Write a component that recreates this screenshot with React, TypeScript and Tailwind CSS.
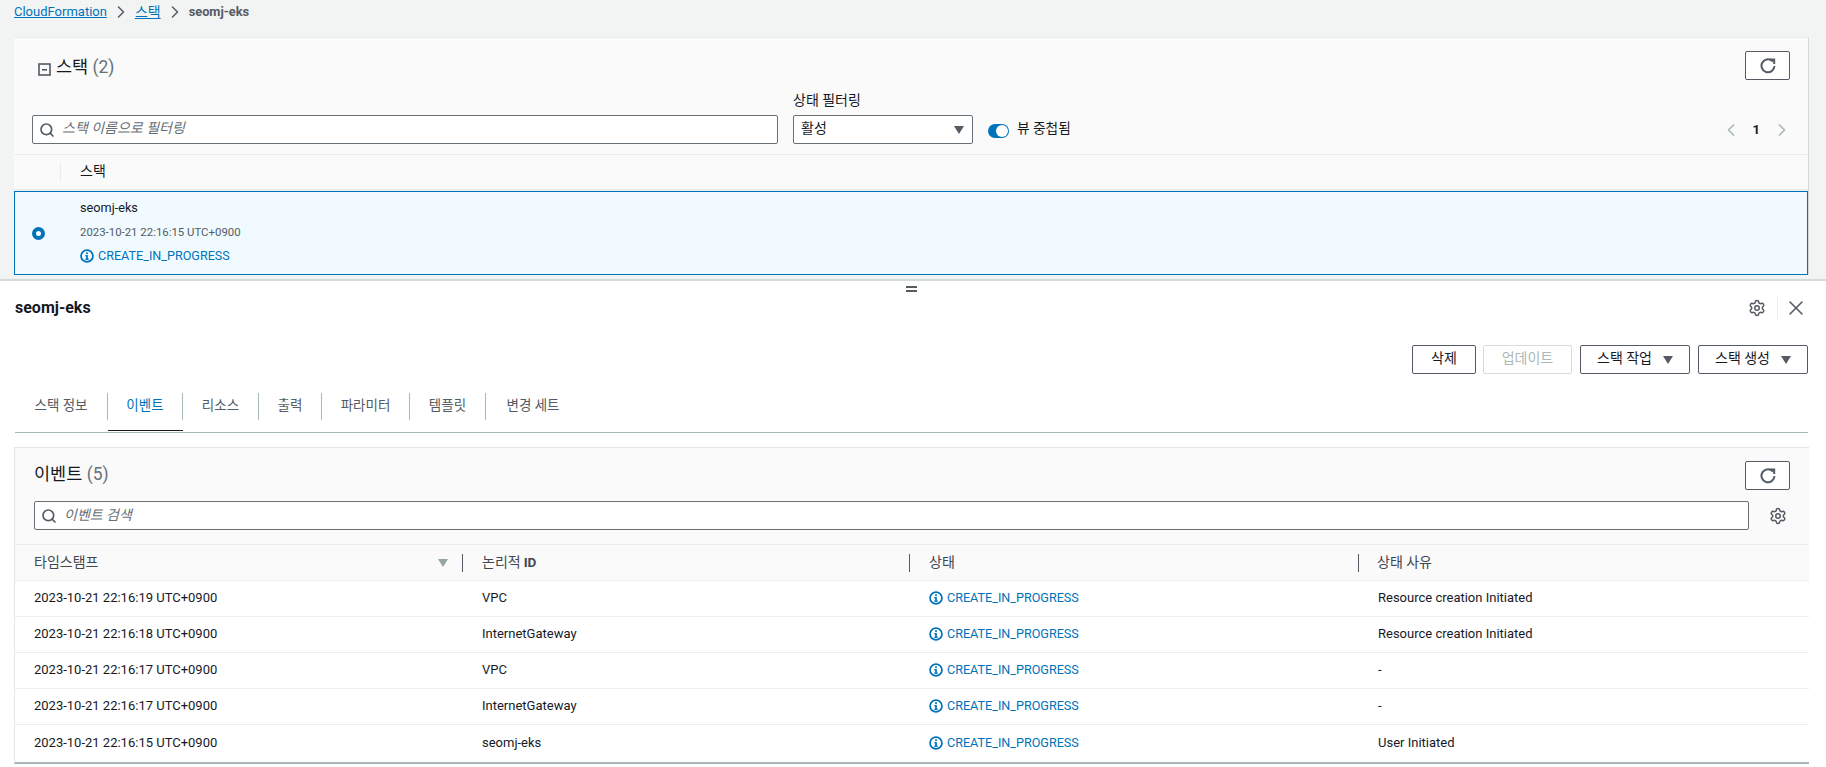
import React from "react";
import { ChevronLeft, ChevronRight, Settings, X, Search } from "lucide-react";

const F = "font-['Roboto','Noto_Sans_CJK_KR',sans-serif]";

function Info() {
  return (
    <svg width="14" height="14" viewBox="0 0 16 16" className="shrink-0">
      <circle cx="8" cy="8" r="6.8" fill="none" stroke="#0073bb" strokeWidth="2" />
      <rect x="7" y="7" width="2" height="5" fill="#0073bb" />
      <rect x="6" y="11" width="4" height="1.4" fill="#0073bb" />
      <rect x="6" y="7" width="2" height="1.3" fill="#0073bb" />
      <rect x="7" y="3.8" width="2" height="2" fill="#0073bb" />
    </svg>
  );
}

function Refresh() {
  return (
    <svg width="16" height="16" viewBox="0 0 16 16" fill="none" stroke="#545b64" strokeWidth="2">
      <path d="M13 3.6A6.5 6.5 0 1 0 14.5 8" />
      <path d="M9.5 1.5 H14.2 V6" strokeWidth="2" />
    </svg>
  );
}

function Caret({ color = "#545b64" }: { color?: string }) {
  return (
    <svg width="10" height="8" viewBox="0 0 10 8" className="shrink-0">
      <path d="M0 0H10L5 8Z" fill={color} />
    </svg>
  );
}

function SearchBox({ text, grow }: { text: string; grow?: boolean }) {
  return (
    <div className={`h-[29px] flex items-center bg-white border border-[#687078] rounded-[2px] pl-[6px] ${grow ? "flex-1" : "w-[746px]"}`}>
      <Search size={16} strokeWidth={2.5} color="#545b64" />
      <span className={`ml-[7px] text-[14px] italic text-[#687078] ${grow ? "" : "pb-[2px]"}`}>{text}</span>
    </div>
  );
}

function Btn({ label, w, caret, disabled }: { label: string; w: string; caret?: boolean; disabled?: boolean }) {
  return (
    <div className={`h-[29px] ${w} flex items-center justify-center gap-[11px] rounded-[2px] border text-[14px] ${disabled ? "border-[#d5dbdb] text-[#aab7b8]" : "border-[#545b64] text-[#16191f] bg-white"}`}>
      <span className="pb-[2px]">{label}</span>
      {caret && <Caret />}
    </div>
  );
}

const rows = [
  ["2023-10-21 22:16:19 UTC+0900", "VPC", "Resource creation Initiated", "h-[36px]"],
  ["2023-10-21 22:16:18 UTC+0900", "InternetGateway", "Resource creation Initiated", "h-[36px]"],
  ["2023-10-21 22:16:17 UTC+0900", "VPC", "-", "h-[36px]"],
  ["2023-10-21 22:16:17 UTC+0900", "InternetGateway", "-", "h-[36px]"],
  ["2023-10-21 22:16:15 UTC+0900", "seomj-eks", "User Initiated", "h-[37px]"],
];

const tabs = [
  ["스택 정보", "w-[93px]"],
  ["이벤트", "w-[75px]"],
  ["리소스", "w-[76px]"],
  ["출력", "w-[63px]"],
  ["파라미터", "w-[88px]"],
  ["템플릿", "w-[76px]"],
  ["변경 세트", "w-[94px]"],
];

export default function App() {
  return (
    <div className={`${F} w-[1826px] h-[767px] overflow-hidden bg-white text-[14px] text-[#16191f]`}>
      {/* Top pane */}
      <div className="h-[279px] overflow-hidden bg-[#f2f3f3] pl-[14px] pr-[17px]">
        <div className="h-[37px] pb-[13px] flex items-center text-[13px]">
          <span className="text-[#0073bb] underline">CloudFormation</span>
          <ChevronRight size={20} color="#545b64" strokeWidth={1.8} className="mx-[4px]" />
          <span className="text-[#0073bb] underline text-[14px]">스택</span>
          <ChevronRight size={20} color="#545b64" strokeWidth={1.8} className="mx-[4px]" />
          <span className="text-[#545b64] font-bold text-[12.8px]">seomj-eks</span>
        </div>
        <div className="bg-[#fafafa] border-t border-[#eaeded] border-r border-r-[#d5dbdb]">
          <div className="h-[116px] pl-[18px] pr-[18px] flex flex-col">
            <div className="flex justify-between pt-[13px] h-[54px]">
              <div className="flex items-center h-[30px] pt-[3px] pl-[6px] gap-[5px]">
                <svg width="13" height="13" viewBox="0 0 13 13" fill="none" className="mt-[3px]">
                  <rect x="1" y="1" width="11" height="11" fill="none" stroke="#545b64" strokeWidth="1.6" />
                  <rect x="4" y="6" width="5" height="1.6" fill="#545b64" />
                </svg>
                <span className="text-[17.5px]">스택 <span className="text-[#687078]">(2)</span></span>
              </div>
              <div className="w-[45px] h-[29px] bg-white border border-[#545b64] rounded-[2px] flex items-center justify-center">
                <Refresh />
              </div>
            </div>
            <div className="flex items-end">
              <SearchBox text="스택 이름으로 필터링" />
              <div className="ml-[15px] flex flex-col w-[180px]">
                <span className="text-[14px] leading-[17px] h-[23px]">상태 필터링</span>
                <div className="h-[29px] bg-white border border-[#687078] rounded-[2px] flex items-center justify-between pl-[7px] pr-[8px]">
                  <span className="pb-[2px]">활성</span>
                  <Caret />
                </div>
              </div>
              <div className="ml-[15px] h-[29px] flex items-center gap-[8px]">
                <div className="w-[21px] h-[14px] rounded-full bg-[#0073bb] flex items-center justify-end pr-[1px] mt-[2px]">
                  <div className="w-[12px] h-[12px] rounded-full bg-white" />
                </div>
                <span className="pb-[2px] text-[13.7px]">뷰 중첩됨</span>
              </div>
              <div className="ml-auto h-[29px] flex items-center mr-[-2px] mt-[2px]">
                <ChevronLeft size={20} color="#aab7b8" strokeWidth={2} />
                <span className="font-bold mx-[12px] text-[13px]">1</span>
                <ChevronRight size={20} color="#aab7b8" strokeWidth={2} />
              </div>
            </div>
          </div>
          <div className="h-[35px] border-t border-[#eaeded] flex items-center">
            <div className="w-[47px] h-[20px] border-r border-[#eaeded]" />
            <span className="ml-[19px] pb-[2px]">스택</span>
          </div>
          <div className="h-[2px] bg-[#eaeded]" />
          <div className="h-[84px] bg-[#f1faff] border border-[#0073bb] flex items-center">
            <div className="ml-[17px] w-[13px] h-[13px] rounded-full border-[4px] border-[#0073bb] bg-white shrink-0" />
            <div className="ml-[35px] flex flex-col mb-[2px]">
              <span className="h-[24px] leading-[24px] text-[12.7px]">seomj-eks</span>
              <span className="h-[24px] leading-[24px] text-[11.4px] text-[#545b64]">2023-10-21 22:16:15 UTC+0900</span>
              <span className="h-[24px] flex items-center gap-[4px] text-[#0073bb] text-[12.6px]"><Info />CREATE_IN_PROGRESS</span>
            </div>
          </div>
        </div>
      </div>
      {/* Bottom pane */}
      <div className="h-[488px] border-t-2 border-[#d5dbdb] bg-white pl-[15px] pr-[18px]">
        <div className="flex justify-center h-[16px] items-center">
          <div className="w-[11px] h-[6px] border-y-2 border-[#545b64]" />
        </div>
        <div className="flex items-center justify-between h-[24px] mt-[-1px]">
          <span className="text-[16px] font-bold">seomj-eks</span>
          <div className="flex items-center">
            <Settings size={18} color="#545b64" strokeWidth={2} />
            <div className="w-px h-[22px] bg-[#eaeded] ml-[11px] mr-[6px]" />
            <X size={24} color="#545b64" strokeWidth={1.6} />
          </div>
        </div>
        <div className="flex justify-end gap-[8px] mt-[25px]">
          <div className="mr-[-1px]"><Btn label="삭제" w="w-[64px]" /></div>
          <Btn label="업데이트" w="w-[89px]" disabled />
          <Btn label="스택 작업" w="w-[110px]" caret />
          <Btn label="스택 생성" w="w-[110px]" caret />
        </div>
        <div className="mt-[19px] h-[40px] flex border-b border-[#aab7b8]">
          {tabs.map(([t, w], i) => (
            <div key={t} className="flex flex-col">
              <div className={`h-[27px] flex items-center justify-center pb-[3px] text-[13.5px] ${w} ${i === 1 ? "text-[#0073bb]" : "text-[#545b64]"} ${i < 6 ? "border-r border-[#aab7b8]" : ""}`}>{t}</div>
              {i === 1 && <div className="mt-[10px] h-[1px] bg-[#16191f]" />}
            </div>
          ))}
        </div>
        <div className="mt-[14px] mr-[-1px] ml-[-1px] border-t border-l border-[#e3e6e6] border-b-2 border-b-[#aab7b8] bg-[#fafafa]">
          <div className="h-[96px] flex flex-col pl-[19px] pr-[19px]">
            <div className="flex justify-between pt-[13px] items-start">
              <span className="text-[17.5px]">이벤트 <span className="text-[#687078]">(5)</span></span>
              <div className="w-[45px] h-[29px] bg-white border border-[#545b64] rounded-[2px] flex items-center justify-center">
                <Refresh />
              </div>
            </div>
            <div className="flex items-center mt-[11px]">
              <SearchBox text="이벤트 검색" grow />
              <div className="w-[41px] pl-[20px] flex">
                <Settings size={18} color="#545b64" strokeWidth={2} />
              </div>
            </div>
          </div>
          <div className="h-[37px] border-t border-b border-[#eaeded] grid grid-cols-[448px_447px_449px_1fr] items-center text-[#414750]">
            <div className="flex items-center justify-between pl-[19px] pr-[14px] h-[18px] border-r border-[#545b64]">
              <span>타임스탬프</span>
              <Caret color="#95a5a6" />
            </div>
            <div className="pl-[19px] h-[18px] flex items-center border-r border-[#545b64]">논리적 <span className="font-bold ml-[3px] text-[13.5px]">ID</span></div>
            <div className="pl-[19px] h-[18px] flex items-center border-r border-[#545b64]">상태</div>
            <div className="pl-[18px]">상태 사유</div>
          </div>
          {rows.map((r, i) => (
            <div key={i} className={`${r[3]} bg-white grid grid-cols-[448px_447px_449px_1fr] items-center text-[13px] ${i < 4 ? "border-b border-[#eaeded]" : ""}`}>
              <div className="pl-[19px] pb-[2px]">{r[0]}</div>
              <div className="pl-[19px] pb-[2px]">{r[1]}</div>
              <div className="pl-[19px] flex items-center gap-[4px] text-[#0073bb] text-[12.6px]"><Info />CREATE_IN_PROGRESS</div>
              <div className="pl-[19px] pb-[2px]">{r[2]}</div>
            </div>
          ))}
        </div>
      </div>
    </div>
  );
}
